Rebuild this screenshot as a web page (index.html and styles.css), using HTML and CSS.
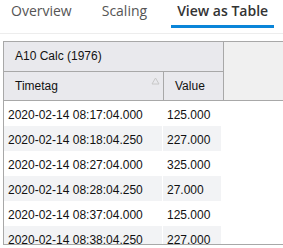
FILE: index.html
```html
<!DOCTYPE html>
<html lang="en">
<head>
  <meta charset="utf-8" />
  <title>View as Table</title>
  <link rel="stylesheet" href="styles.css">
</head>
<body>
  <div class="tabs">
    <a class="tab">Overview</a>
    <a class="tab">Scaling</a>
    <a class="tab active">View as Table</a>
  </div>

  <div class="grid">
    <div class="head">
      <div class="head-cols">
        <div class="hcell group">A10 Calc (1976)</div>
        <div class="hrow">
          <div class="hcell time">Timetag
            <svg class="sort" width="9" height="8" viewBox="0 0 9 8"><path d="M4.5 1 L8 7 L1 7 Z" fill="none" stroke="#c8c8c8" stroke-width="1"/></svg>
          </div>
          <div class="hcell val">Value</div>
        </div>
      </div>
    </div>
    <div class="body">
      <div class="row"><div class="cell time">2020-02-14 08:17:04.000</div><div class="cell val">125.000</div></div>
      <div class="row alt"><div class="cell time">2020-02-14 08:18:04.250</div><div class="cell val">227.000</div></div>
      <div class="row"><div class="cell time">2020-02-14 08:27:04.000</div><div class="cell val">325.000</div></div>
      <div class="row alt"><div class="cell time">2020-02-14 08:28:04.250</div><div class="cell val">27.000</div></div>
      <div class="row"><div class="cell time">2020-02-14 08:37:04.000</div><div class="cell val">125.000</div></div>
      <div class="row alt"><div class="cell time">2020-02-14 08:38:04.250</div><div class="cell val">227.000</div></div>
    </div>
  </div>
</body>
</html>
```

FILE: styles.css
```css
body {
  margin: 0;
  background: white;
  overflow: hidden;
}

.tabs {
  display: flex;
  align-items: flex-start;
  height: 33px;
  border-bottom: 1px solid #ededed;
  padding-left: 5px;
  gap: 18px;
  font-family: "Open Sans", sans-serif;
  font-size: 14px;
}

.tab {
  display: block;
  height: 25px;
  line-height: 22px;
  padding: 0 6px;
  color: #555;
  border-bottom: 3px solid transparent;
}

.tab.active {
  color: #333;
  font-weight: 600;
  border-bottom-color: #0a85d9;
}

.grid {
  margin: 7px 0 0 3px;
  width: 290px;
  height: 202px;
  border: 1px solid #a8a8a8;
  border-right: none;
  overflow: hidden;
  font-family: "Liberation Sans", Arial, sans-serif;
  font-size: 12px;
  color: #111;
}

.head {
  background: #f0f0f0;
  border-bottom: 1px solid #a8a8a8;
}

.head-cols {
  width: 220px;
}

.hrow {
  display: flex;
}

.hcell {
  height: 29px;
  line-height: 29px;
  padding-left: 11px;
  background: #e9e9ed;
  border-right: 1px solid #a8a8a8;
  box-sizing: content-box;
}

.hrow .hcell {
  height: 28px;
  line-height: 28px;
}

.hcell.group {
  border-bottom: 1px solid #a8a8a8;
}

.hcell.time {
  position: relative;
  width: 148px;
}

.hcell.val {
  width: 48px;
}

.sort {
  position: absolute;
  right: 3px;
  top: 5px;
}

.row {
  display: flex;
  width: 219px;
  height: 25px;
  gap: 1px;
}

.cell {
  padding: 3px 0 0 4px;
  line-height: 22px;
}

.row.alt .cell {
  background: #f2f3f5;
}

.cell.time {
  width: 154px;
}

.cell.val {
  width: 54px;
}
```
